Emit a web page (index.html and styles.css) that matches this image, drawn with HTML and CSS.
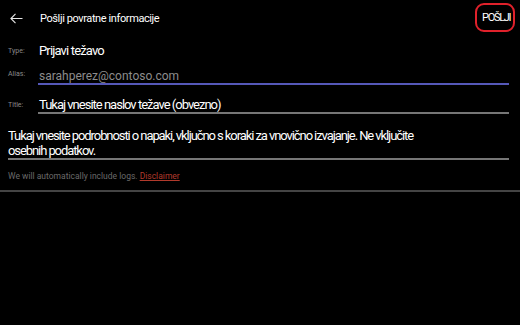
FILE: index.html
```html
<!DOCTYPE html>
<html>
<head>
<meta charset="utf-8">
<link rel="stylesheet" href="styles.css">
</head>
<body>
<div class="app">
  <header class="bar">
    <button class="back" aria-label="Back">
      <svg width="13" height="11" viewBox="0 0 13 11"><path d="M5.5 0.8 L0.9 5.5 L5.5 10.2 M0.9 5.5 H12.5" fill="none" stroke="#e6e6e6" stroke-width="1.1"/></svg>
    </button>
    <div class="title">Pošlji povratne informacije</div>
    <div class="send">POŠLJI</div>
  </header>
  <div class="form">
    <div class="row row-type">
      <span class="label">Type:</span>
      <span class="value">Prijavi težavo</span>
    </div>
    <div class="row row-alias">
      <span class="label">Alias:</span>
      <span class="field field-active placeholder">sarahperez@contoso.com</span>
    </div>
    <div class="row row-title">
      <span class="label">Title:</span>
      <span class="field">Tukaj vnesite naslov težave (obvezno)</span>
    </div>
    <div class="desc">Tukaj vnesite podrobnosti o napaki, vključno s koraki za vnovično izvajanje. Ne vključite osebnih podatkov.</div>
    <div class="note">We will automatically include logs. <a class="disc">Disclaimer</a></div>
  </div>
  <div class="divider"></div>
</div>
</body>
</html>
```
FILE: styles.css
```css
* { box-sizing: border-box; }
html, body { margin: 0; padding: 0; background: #000; }
body { width: 520px; height: 325px; overflow: hidden; font-family: Roboto, "Liberation Sans", sans-serif; color: #fff; }
.bar { display: flex; align-items: center; height: 36px; padding: 0 5px 0 10px; }
.back { background: none; border: 0; padding: 0; width: 30px; height: 11px; display: flex; align-items: center; }
.title { font-size: 11px; letter-spacing: -0.4px; flex: 1; padding-top: 1px; }
.send { width: 40px; height: 29px; margin-top: -1px; display: flex; align-items: center; padding-left: 5px; font-size: 11px; letter-spacing: -1.3px; border: 2px solid #e0212b; border-radius: 9px; }
.form { padding: 0 11px 0 8px; }
.row { display: flex; align-items: flex-end; }
.row-type { margin-top: 7px; }
.row-alias { margin-top: 10px; }
.row-title { margin-top: 13px; }
.label { width: 30px; font-size: 7px; line-height: 8px; color: #8a8a8a; }
.row-type .label { padding-bottom: 4px; }
.row-alias .label { padding-bottom: 7px; }
.row-title .label { padding-bottom: 5px; }
.value { font-size: 13px; line-height: 16px; letter-spacing: -0.85px; padding-left: 1px; }
.field { flex: 1; font-size: 13px; line-height: 14px; letter-spacing: -1px; padding-left: 1px; border-bottom: 2px solid #767676; }
.field-active { border-bottom-color: #5558b8; }
.placeholder { font-size: 12px; letter-spacing: 0; color: #8c8c8c; }
.desc { margin-top: 14px; padding-right: 62px; font-size: 13px; line-height: 15px; letter-spacing: -1.08px; border-bottom: 2px solid #767676; }
.note { margin-top: 11px; font-size: 8.5px; line-height: 10px; color: #6a6a6a; height: 19px; }
.disc { color: #b23a2c; text-decoration: underline; }
.divider { height: 2px; background: #444; }
```
